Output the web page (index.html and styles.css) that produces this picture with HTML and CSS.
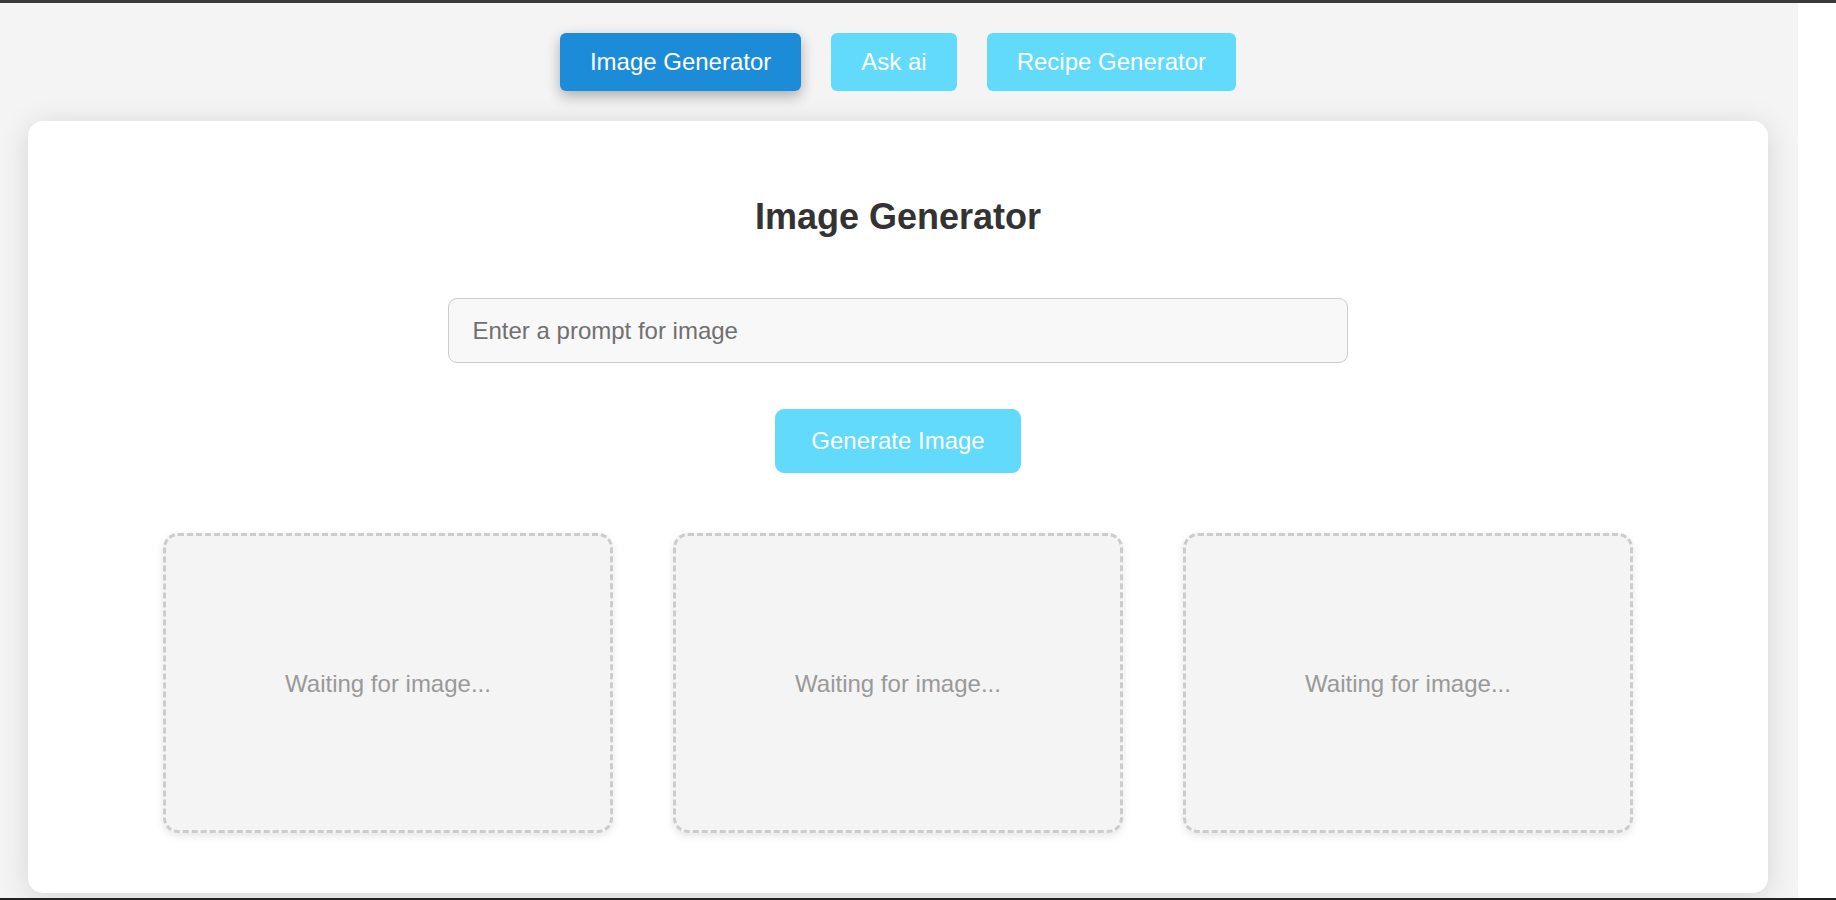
FILE: index.html
```html
<!DOCTYPE html>
<html lang="en">
<head>
<meta charset="utf-8">
<title>Image Generator</title>
<link rel="stylesheet" href="styles.css">
</head>
<body>
<div class="frame">
  <div class="page">
    <nav class="nav">
      <button class="nav-btn active">Image Generator</button>
      <button class="nav-btn">Ask ai</button>
      <button class="nav-btn">Recipe Generator</button>
    </nav>
    <main class="card">
      <h2 class="title">Image Generator</h2>
      <input class="prompt" type="text" placeholder="Enter a prompt for image">
      <button class="generate">Generate Image</button>
      <div class="images">
        <div class="image-box">Waiting for image...</div>
        <div class="image-box">Waiting for image...</div>
        <div class="image-box">Waiting for image...</div>
      </div>
    </main>
  </div>
  <div class="gutter"></div>
</div>
</body>
</html>
```

FILE: styles.css
```css
* { box-sizing: border-box; }

html, body {
  margin: 0;
  padding: 0;
  background: #ffffff;
  font-family: "Liberation Sans", Arial, sans-serif;
}

.frame {
  height: 900px;
  display: flex;
  border-top: 3px solid #3a3a3a;
  border-bottom: 2px solid #222222;
  overflow: hidden;
  background: #ffffff;
}

.page {
  width: 1798px;
  flex: none;
  background: #f4f4f4;
  display: flex;
  flex-direction: column;
}

.gutter {
  flex: 1;
  background: #ffffff;
}

.nav {
  margin-top: 30px;
  display: flex;
  justify-content: center;
  gap: 30px;
  padding-right: 2px;
}

.nav-btn {
  height: 58px;
  padding: 0 30px;
  border: none;
  border-radius: 6px;
  background: #61dafb;
  color: #ffffff;
  font-family: "Liberation Sans", Arial, sans-serif;
  font-size: 24px;
  cursor: pointer;
}

.nav-btn.active {
  background: #1d8cd8;
  box-shadow: 0 5px 14px rgba(0, 0, 0, 0.3);
}

.card {
  margin: 30px 0 0 28px;
  width: 1740px;
  background: #ffffff;
  border-radius: 15px;
  box-shadow: 0 4px 30px rgba(0, 0, 0, 0.13);
  padding: 75px 0 60px;
  display: flex;
  flex-direction: column;
  align-items: center;
}

.title {
  margin: 0;
  font-size: 36px;
  line-height: 41px;
  font-weight: bold;
  color: #333333;
}

.prompt {
  margin-top: 61px;
  width: 900px;
  height: 65px;
  padding: 0 23.5px;
  border: 1px solid #cccccc;
  border-radius: 9px;
  background: #f8f8f8;
  font-family: "Liberation Sans", Arial, sans-serif;
  font-size: 24px;
  color: #333333;
  outline: none;
}

.prompt::placeholder {
  color: #707070;
}

.generate {
  margin-top: 46px;
  height: 64px;
  padding: 0 36px;
  border: none;
  border-radius: 9px;
  background: #61dafb;
  color: #ffffff;
  font-family: "Liberation Sans", Arial, sans-serif;
  font-size: 24px;
  cursor: pointer;
}

.images {
  margin-top: 60px;
  display: flex;
  justify-content: center;
  gap: 60px;
}

.image-box {
  width: 450px;
  height: 300px;
  border: 3px dashed #cccccc;
  border-radius: 15px;
  background: #f4f4f4;
  box-shadow: 0 3px 8px rgba(0, 0, 0, 0.1);
  display: flex;
  align-items: center;
  justify-content: center;
  padding-top: 2px;
  font-size: 24px;
  color: #999999;
}
```
